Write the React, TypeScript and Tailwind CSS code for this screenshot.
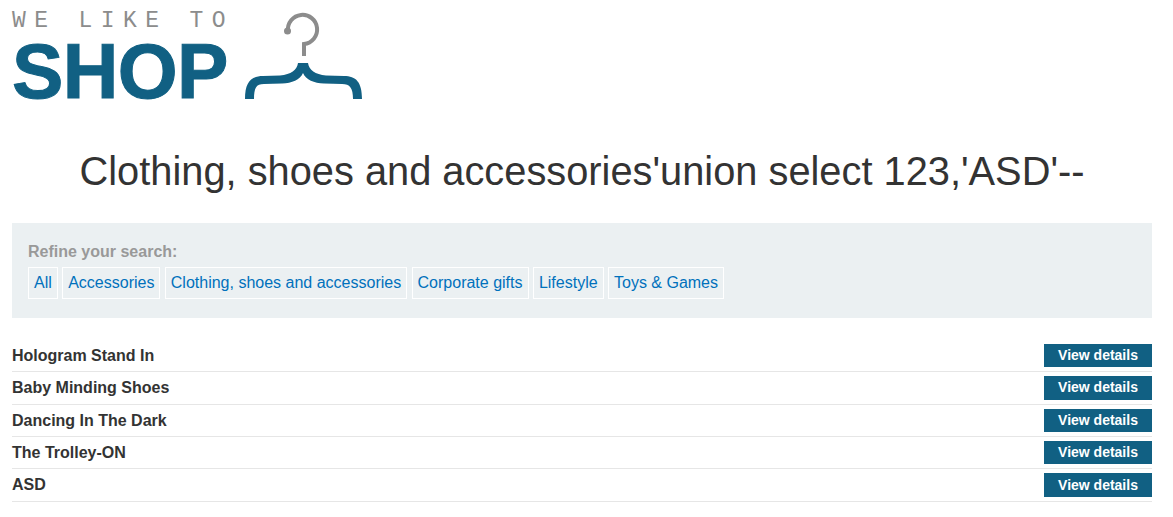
const cats = ["All", "Accessories", "Clothing, shoes and accessories", "Corporate gifts", "Lifestyle", "Toys & Games"];
const rows = ["Hologram Stand In", "Baby Minding Shoes", "Dancing In The Dark", "The Trolley-ON", "ASD"];

function Hanger() {
  return (
    <svg width="120" height="92" viewBox="0 0 120 92" className="ml-[15px] mt-[10px] shrink-0" fill="none">
      <path d="M44 21 A14.6 14.6 0 1 1 60 34 L60 46" stroke="#8c8c8c" strokeWidth="4" />
      <circle cx="43.5" cy="21" r="3.5" fill="#8c8c8c" />
      <path
        d="M54 53 L64 53 C65 60 71 64.5 82 65.5 L100 66 C112 66 118 72 118 89 L109 89 C109 78 106 74 98 74 L80 73.5 C70 73 62 70 59 63 C56 70 48 73 38 73.5 L20 74 C12 74 10 78 10 89 L1 89 C1 72 7 66 19 66 L36 65.5 C47 64.5 53 60 54 53 Z"
        fill="#116083"
      />
    </svg>
  );
}

export default function App() {
  return (
    <div className="w-[1173px] h-[517px] overflow-hidden bg-white pl-3 pr-[21px] font-['Liberation_Sans',Arial,sans-serif] text-[#333]">
      <div className="flex h-[103px]">
        <div className="w-[217px] shrink-0">
          <div className="pt-[10px] h-[41px] font-['Liberation_Mono',monospace] text-[23px] leading-[22px] tracking-[8.4px] text-[#8c8c8c] whitespace-pre">WE LIKE TO</div>
          <div className="text-[77px] leading-[58px] pt-[1px] font-bold text-[#116083] tracking-[-0.6px] [-webkit-text-stroke:1px_#116083]">SHOP</div>
        </div>
        <Hanger />
      </div>
      <h1 className="mt-[43px] h-[51px] text-center text-[39.8px] leading-[51px] font-normal whitespace-nowrap">Clothing, shoes and accessories'union select 123,'ASD'--</h1>
      <div className="mt-[26px] h-[95px] bg-[#ebf0f2] pl-4 pt-[19px]">
        <div className="text-[16px] leading-[20px] font-bold text-[#999]">Refine your search:</div>
        <div className="mt-[5px] flex gap-[4.4px]">
          {cats.map((c) => (
            <a key={c} className="h-[32px] border border-white px-[5px] text-[16px] leading-[30px] text-[#0071bc]">{c}</a>
          ))}
        </div>
      </div>
      <div className="mt-[22px]">
        {rows.map((r) => (
          <div key={r} className="flex h-[32.35px] items-start justify-between border-b border-[#e6e6e6] pt-1">
            <span className="text-[16px] leading-[23px] font-bold">{r}</span>
            <a className="flex h-[23.3px] w-[108px] items-center justify-center bg-[#116083] text-[14px] font-bold text-white">View details</a>
          </div>
        ))}
      </div>
    </div>
  );
}
